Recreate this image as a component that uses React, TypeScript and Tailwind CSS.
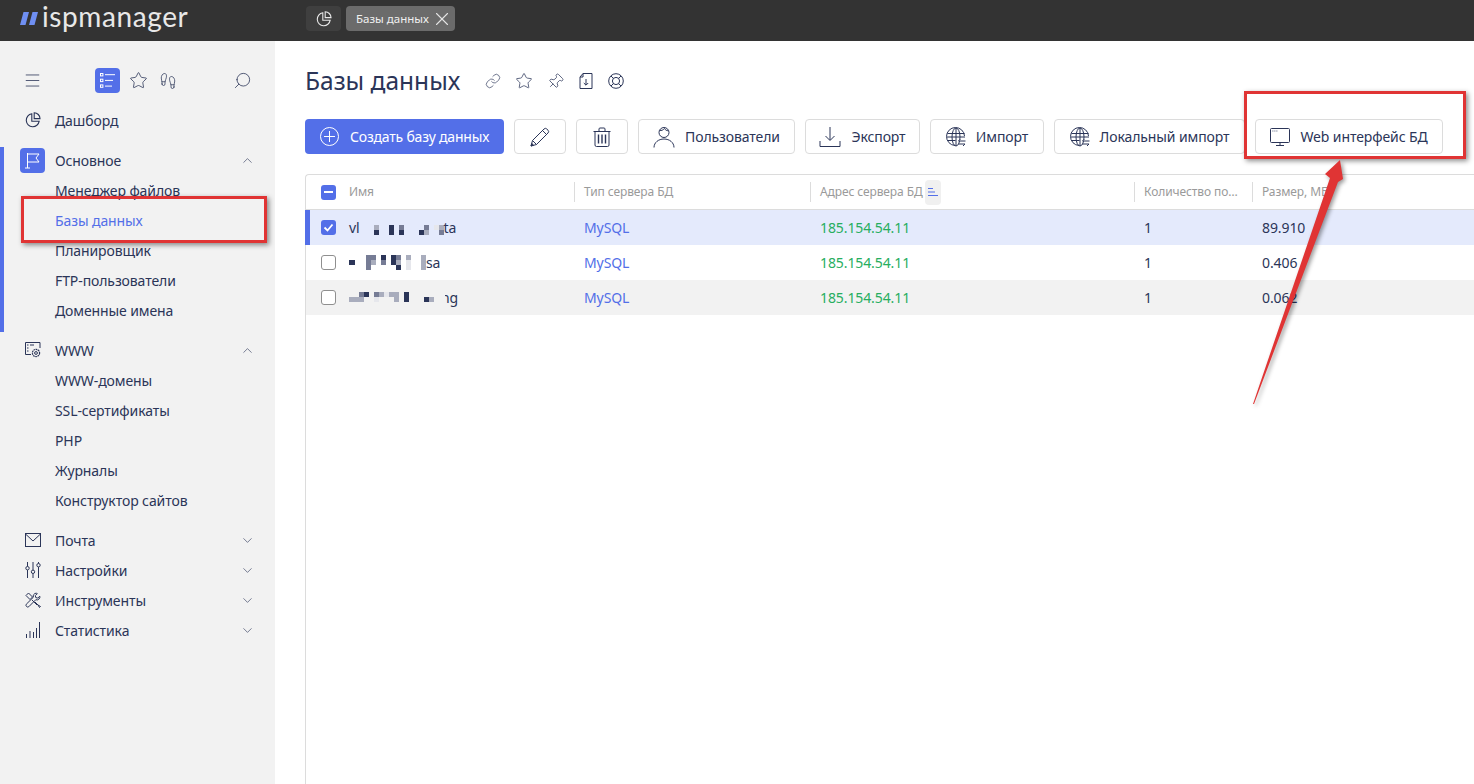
import { ChevronDown, ChevronUp, Link, Menu, Pin, Search, Star, Footprints, X } from "lucide-react";
import type { ReactNode } from "react";

const font = { fontFamily: '"Noto Sans", sans-serif' };

function Pie({ className }: { className: string }) {
  return (
    <svg className={className} viewBox="0 0 16 16" fill="none" stroke="currentColor" strokeWidth="1.1">
      <path d="M6.8 1.8a6.5 6.5 0 1 0 7.4 7.4H6.8z" />
      <path d="M9.2.8v5.8H15A5.8 5.8 0 0 0 9.2.8z" />
    </svg>
  );
}

function Line({ size, box, children, className = "" }: { size: number; box?: number; children: ReactNode; className?: string }) {
  const b = box ?? size;
  return (
    <svg width={size} height={size} viewBox={`0 0 ${b} ${b}`} fill="none" stroke="currentColor" strokeWidth="1" className={`shrink-0 ${className}`}>
      {children}
    </svg>
  );
}

const Flag = () => (
  <Line size={17} className="text-white">
    <path d="M3.5 1v15M1 16h5M3.5 2H15l-3 4 3 4H3.5" />
  </Line>
);

const SiteGear = () => (
  <Line size={16}>
    <path d="M6 12.5H.5V.5h14.5V6" />
    <path d="M2 3h1.5M5 3h4M2 6h1.5M2 9h1.5" />
    <circle cx="11" cy="11" r="3.6" strokeDasharray="1.7 .6" strokeWidth="1.2" />
    <circle cx="11" cy="11" r="1.4" />
  </Line>
);

const Bars = () => (
  <Line size={16}>
    <path d="M1.5 16v-4M5 16V9M8.5 16v-6M11.5 16V6M14.5 16V0" />
  </Line>
);

const Tasks = () => (
  <Line size={15} className="text-white">
    <rect x="0.5" y="0.5" width="2.4" height="2.4" />
    <rect x="0.5" y="6.2" width="2.4" height="2.4" />
    <rect x="0.5" y="11.9" width="2.4" height="2.4" />
    <path d="M5 1.7h10M5 7.4h8M5 13.1h7" />
  </Line>
);

const Envelope = () => (
  <Line size={16}>
    <rect x="0.5" y="1.5" width="15" height="13" />
    <path d="M.5 2l7.5 7 7.5-7" />
  </Line>
);

const Sliders = () => (
  <Line size={16}>
    <path d="M2.5 0v4.5M2.5 8v8M8 0v8M8 11.5V16M13.5 0v1.5M13.5 5v11" />
    <circle cx="2.5" cy="6.2" r="1.7" />
    <circle cx="8" cy="9.8" r="1.7" />
    <circle cx="13.5" cy="3.2" r="1.7" />
  </Line>
);

const Tools = () => (
  <Line size={16}>
    <path d="M1 3.5L3.5 1l4 4-2.5 2.5zM7 8l5 5" />
    <path d="M11 1.2a3 3 0 0 0-2.6 4L1.3 12.2a1.8 1.8 0 0 0 2.5 2.5l7-7a3 3 0 0 0 4-3.6l-2 2-2-.5-.5-2 2-2a3 3 0 0 0-1.3-.4z" />
    <path d="M10 10l3 3 1.5 2.5 1-1L13 13" />
  </Line>
);

const FileArrow = () => (
  <Line size={16}>
    <path d="M5 .5h9v15H2V4zM5 .5V4H2" />
    <path d="M8 6v6M5.8 10L8 12.2 10.2 10" />
  </Line>
);

const Buoy = () => (
  <Line size={16}>
    <circle cx="8" cy="8" r="7.3" />
    <circle cx="8" cy="8" r="3.6" />
    <path d="M3 3l2.5 2.5M13 3l-2.5 2.5M3 13l2.5-2.5M13 13l-2.5-2.5" />
  </Line>
);

const PencilIcon = () => (
  <Line size={20}>
    <path d="M1 19l1.5-5.5L14 2a2 2 0 0 1 2.8 0l1.2 1.2a2 2 0 0 1 0 2.8L6.5 17.5z" />
    <path d="M12.5 3.5l4 4M2.5 13.5l4 4M4 12l9.5-9.5M8 16l9.5-9.5" />
    <path d="M1 19l2.5-.8-1.7-1.7z" fill="currentColor" />
  </Line>
);

const Bin = () => (
  <Line size={20}>
    <path d="M1.5 4.5h17M7 4.5V2a1 1 0 0 1 1-1h4a1 1 0 0 1 1 1v2.5" />
    <path d="M3 4.5V18a1.5 1.5 0 0 0 1.5 1.5h11A1.5 1.5 0 0 0 17 18V4.5" />
    <path d="M6.5 7.5v9M10 7.5v9M13.5 7.5v9" strokeWidth="1.4" />
  </Line>
);

const Person = () => (
  <Line size={22}>
    <circle cx="11" cy="6.5" r="5" />
    <path d="M6.5 4.5c2 .2 3.5-.3 5-2 1 1.7 2 2.2 4 2.2" />
    <path d="M1 21.5c0-5 4.5-8.5 10-8.5s10 3.5 10 8.5" />
  </Line>
);

const Tray = () => (
  <Line size={22}>
    <path d="M11 1v13M6.5 10l4.5 4.5 4.5-4.5" />
    <path d="M1 15v5.5h20V15" />
  </Line>
);

const GlobeArrows = () => (
  <Line size={20}>
    <path d="M9 18.5A9 9 0 1 1 18.5 9" />
    <ellipse cx="10" cy="10" rx="4" ry="9" />
    <path d="M10 1v18M1.5 6.5h17M1 10h18M1.5 13.5h8" />
    <path d="M19.5 14H12.5l2-2M12 17h7l-2 2" fill="#fff" />
  </Line>
);

const Screen = () => (
  <Line size={20}>
    <rect x="0.5" y="1.5" width="19" height="14" rx="1" />
    <path d="M6 18.5h8M10 15.5v3M2.5 4h.8M4.5 4h.8M6.5 4h.8" />
  </Line>
);

// pixelated (censored) bits of the database names
function Mosaic({ cells, width }: { cells: [number, number, string][]; width: number }) {
  return (
    <svg width={width} height="15" viewBox={`0 0 ${width} 15`} className="shrink-0">
      {cells.map(([x, y, c], i) => (
        <rect key={i} x={x} y={y} width="5" height="5" fill={c} />
      ))}
    </svg>
  );
}

const D = "#2b3558";
const M = "#767c95";
const L = "#a9adbd";
const P = "#e6e7ec";

const mosaic1: [number, number, string][] = [
  [0, 5, L], [0, 10, D],
  [15, 5, D], [15, 10, D],
  [25, 5, M], [25, 10, D],
  [45, 10, D], [50, 5, M], [50, 10, L],
  [60, 5, P], [65, 5, L], [65, 10, M],
];

const mosaic2: [number, number, string][] = [
  [0, 0, M], [0, 5, M], [0, 10, M], [5, 0, M], [5, 5, L],
  [15, 0, D], [15, 5, M],
  [25, 0, D], [25, 5, D], [30, 0, M], [30, 5, L], [30, 10, D],
  [40, 0, L], [40, 5, P], [40, 10, P],
  [55, 0, L], [55, 5, L], [55, 10, L],
];

const mosaic3: [number, number, string][] = [
  [0, 7, L], [5, 7, L], [10, 2, M], [10, 7, L], [15, 2, D],
  [25, 2, M], [25, 7, P], [30, 2, L], [35, 2, P], [40, 2, L], [45, 2, L], [45, 7, L],
  [55, 2, D], [55, 7, D],
  [75, 7, D], [80, 7, L],
];

function SideItem({ icon, label, open, tile }: { icon?: ReactNode; label: string; open?: boolean; tile?: boolean }) {
  return (
    <div className="flex items-center h-[30px] pl-[20px] pr-[20px] text-[14px] text-[#2b3558]">
      <div className={`w-[25px] h-[25px] shrink-0 flex items-center justify-center rounded-[4px] ${tile ? "bg-[#536fe8]" : ""}`}>{icon}</div>
      <span className="ml-[10px] flex-1 whitespace-nowrap tracking-[-0.1px]">{label}</span>
      {open === true && <ChevronUp className="w-[15px] h-[15px]" strokeWidth={1} />}
      {open === false && <ChevronDown className="w-[15px] h-[15px]" strokeWidth={1} />}
    </div>
  );
}

function ToolButton({ icon, label, className }: { icon: ReactNode; label?: string; className: string }) {
  return (
    <div className={`h-[35px] shrink-0 flex items-center justify-center gap-[10px] rounded-[4px] border border-[#dcdcdc] bg-white text-[14px] text-[#2b3558] whitespace-nowrap tracking-[-0.1px] ${className}`}>
      {icon}
      {label && <span>{label}</span>}
    </div>
  );
}

function Check({ state }: { state: "on" | "off" | "some" }) {
  if (state === "off") return <div className="w-[15px] h-[15px] rounded-[3px] border border-[#8f8f8f] bg-white" />;
  return (
    <div className="w-[15px] h-[15px] rounded-[3px] bg-[#536fe8] flex items-center justify-center">
      {state === "on" ? (
        <svg className="w-[11px] h-[11px]" viewBox="0 0 11 11" fill="none" stroke="white" strokeWidth="1.8">
          <path d="M1.5 5.5l3 3 5-6" />
        </svg>
      ) : (
        <div className="w-[9px] h-[2px] bg-white" />
      )}
    </div>
  );
}

function Row({ check, name, size, className, selected }: { check: "on" | "off"; name: ReactNode; size: string; className?: string; selected?: boolean }) {
  return (
    <div className={`relative grid grid-cols-[268px_236px_324px_118px_1fr] h-[35px] items-center text-[14px] text-[#2b3558] tracking-[-0.1px] ${className ?? ""}`}>
      {selected && <div className="absolute left-[-1px] top-0 bottom-0 w-[5px] bg-[#536fe8]" />}
      <div className="flex items-center pl-[15px] gap-[13px]">
        <Check state={check} />
        <div className="flex items-center">{name}</div>
      </div>
      <div className="pl-[10px] text-[#536fe8]">MySQL</div>
      <div className="pl-[10px] text-[#27ae60]">185.154.54.11</div>
      <div className="pl-[10px]">1</div>
      <div className="pl-[10px]">{size}</div>
    </div>
  );
}

function HeadCell({ children }: { children: ReactNode }) {
  return <div className="h-[20px] pl-[9px] flex items-center border-l border-[#dcdcdc] whitespace-nowrap">{children}</div>;
}

const sub = ["Менеджер файлов", "Базы данных", "Планировщик", "FTP-пользователи", "Доменные имена"];
const www = ["WWW-домены", "SSL-сертификаты", "PHP", "Журналы", "Конструктор сайтов"];

export default function App() {
  return (
    <div className="relative w-[1474px] h-[784px] overflow-hidden bg-white flex flex-col" style={font}>
      <header className="h-[41px] shrink-0 bg-[#333333] flex items-start">
        <div className="w-[306px] shrink-0 pl-[20px] h-[35px] flex items-center">
          <svg className="w-[18px] h-[13px] mt-[2px]" viewBox="0 0 18 13" fill="#6f8ff2">
            <path d="M3.5 0H9L5.5 13H0zM12.5 0H18l-3.5 13H9z" />
          </svg>
          <span className="ml-[4px] -mt-[4px] text-[28px] leading-none text-[#e8e8e8] tracking-[0.6px]" style={{ fontFamily: "Lato, sans-serif" }}>ispmanager</span>
        </div>
        <div className="mt-[6px] flex gap-[5px]">
          <div className="w-[35px] h-[25px] rounded-[4px] bg-[#3f3f3f] text-[#e8e8e8] flex items-center justify-center">
            <Pie className="w-[16px] h-[16px]" />
          </div>
          <div className="w-[109px] h-[25px] rounded-[4px] bg-[#6b6b6b] text-[#f0f0f0] text-[11.5px] flex items-center pl-[10px] gap-[2px] whitespace-nowrap">
            Базы данных
            <X className="w-[22px] h-[22px] text-[#e4e4e4]" strokeWidth={1.2} />
          </div>
        </div>
      </header>

      <div className="flex-1 flex min-h-0">
        <aside className="relative w-[275px] shrink-0 bg-[#f2f2f2] pt-[27px] text-[#2b3558]">
          <div className="flex items-center h-[25px] pl-[23px] pr-[23px]">
            <Menu className="w-[19px] h-[19px]" strokeWidth={1} />
            <div className="ml-[53px] w-[25px] h-[25px] rounded-[4px] bg-[#536fe8] flex items-center justify-center"><Tasks /></div>
            <Star className="ml-[9px] w-[19px] h-[19px]" strokeWidth={1} />
            <Footprints className="ml-[11px] w-[18px] h-[18px]" strokeWidth={1} />
            <Search className="ml-auto w-[19px] h-[19px] -scale-x-100" strokeWidth={1} />
          </div>

          <div className="mt-[12px]">
            <SideItem icon={<Pie className="w-[16px] h-[16px]" />} label="Дашборд" />
          </div>

          <div className="relative mt-[10px]">
            <div className="absolute left-0 top-[2px] bottom-[-7px] w-[4px] bg-[#536fe8]" />
            <SideItem icon={<Flag />} label="Основное" open tile />
            {sub.map((s, i) => (
              <div key={s} className={`h-[30px] pl-[55px] flex items-center text-[14px] tracking-[-0.1px] ${i === 1 ? "text-[#536fe8]" : ""}`}>{s}</div>
            ))}
          </div>

          <div className="mt-[10px]">
            <SideItem icon={<SiteGear />} label="WWW" open />
            {www.map((s) => (
              <div key={s} className="h-[30px] pl-[55px] flex items-center text-[14px] tracking-[-0.1px]">{s}</div>
            ))}
          </div>

          <div className="mt-[10px]">
            <SideItem icon={<Envelope />} label="Почта" open={false} />
            <SideItem icon={<Sliders />} label="Настройки" open={false} />
            <SideItem icon={<Tools />} label="Инструменты" open={false} />
            <SideItem icon={<Bars />} label="Статистика" open={false} />
          </div>
        </aside>

        <main className="flex-1 min-w-0 pl-[30px] pt-[26px] flex flex-col">
          <div className="flex items-center h-[28px] text-[#2b3558]">
            <h1 className="text-[24.5px] font-normal leading-none whitespace-nowrap w-[180px]">Базы данных</h1>
            <div className="flex items-center gap-[14px]">
              <Link className="w-[16px] h-[16px]" strokeWidth={1} />
              <Star className="w-[18px] h-[18px]" strokeWidth={1} />
              <Pin className="w-[17px] h-[17px] rotate-45" strokeWidth={1} />
              <FileArrow />
              <Buoy />
            </div>
          </div>

          <div className="mt-[24px] flex gap-[10px] pr-[20px]">
            <div className="w-[199px] h-[35px] shrink-0 rounded-[4px] bg-[#536fe8] text-white text-[14px] tracking-[-0.2px] flex items-center pl-[15px] gap-[11px] whitespace-nowrap">
              <Line size={19}>
                <circle cx="9.5" cy="9.5" r="9" />
                <path d="M9.5 4v11M4 9.5h11" />
              </Line>
              Создать базу данных
            </div>
            <ToolButton className="w-[52px]" icon={<PencilIcon />} />
            <ToolButton className="w-[52px]" icon={<Bin />} />
            <ToolButton className="w-[157px]" icon={<Person />} label="Пользователи" />
            <ToolButton className="w-[115px]" icon={<Tray />} label="Экспорт" />
            <ToolButton className="w-[114px]" icon={<GlobeArrows />} label="Импорт" />
            <ToolButton className="w-[191px]" icon={<GlobeArrows />} label="Локальный импорт" />
            <ToolButton className="w-[188px]" icon={<Screen />} label="Web интерфейс БД" />
          </div>

          <div className="mt-[20px] flex-1 border-l border-t border-[#dcdcdc] rounded-tl-[4px]">
            <div className="grid grid-cols-[268px_236px_324px_118px_1fr] h-[35px] items-center text-[12px] text-[#9a9a9a] tracking-[-0.1px] border-b border-[#dcdcdc]">
              <div className="flex items-center pl-[15px] gap-[13px]">
                <Check state="some" />
                Имя
              </div>
              <HeadCell>Тип сервера БД</HeadCell>
              <HeadCell>
                Адрес сервера БД
                <span className="ml-[2px] w-[16px] h-[25px] rounded-[4px] bg-[#f0f0f0] flex items-center justify-center text-[#536fe8]">
                  <svg className="w-[10px] h-[10px]" viewBox="0 0 10 10" stroke="currentColor" strokeWidth="1.2">
                    <path d="M0 1.5h5M0 5h7M0 8.5h10" />
                  </svg>
                </span>
              </HeadCell>
              <HeadCell>Количество по…</HeadCell>
              <HeadCell>Размер, МБ</HeadCell>
            </div>
            <Row
              check="on"
              size="89.910"
              selected
              className="bg-[#e4eafc]"
              name={<>vl<span className="ml-[14px]"><Mosaic width={70} cells={mosaic1} /></span><span>ta</span></>}
            />
            <Row
              check="off"
              size="0.406"
              name={<><span className="w-[6px] h-[5px] bg-[#2b3558]" /><span className="ml-[11px]"><Mosaic width={60} cells={mosaic2} /></span><span>sa</span></>}
            />
            <Row
              check="off"
              size="0.062"
              className="bg-[#f2f2f2]"
              name={<><Mosaic width={87} cells={mosaic3} /><span className="relative ml-[5px]">ng<span className="absolute left-0 top-0 bottom-0 w-[4px] bg-[#f2f2f2]" /></span></>}
            />
          </div>
        </main>
      </div>

      {/* screenshot annotations drawn over the page */}
      <div className="absolute left-[21px] top-[196px] w-[246px] h-[47px] border-[3px] border-[#e03434] shadow-[2px_2px_5px_rgba(0,0,0,0.45)]" />
      <div className="absolute left-[1244px] top-[91px] w-[222px] h-[68px] border-[3px] border-[#e03434] shadow-[2px_2px_5px_rgba(0,0,0,0.45)]" />
      <svg className="absolute left-[1245px] top-[155px] w-[110px] h-[255px] drop-shadow-[2px_2px_2px_rgba(0,0,0,0.4)]" viewBox="0 0 110 255">
        <path d="M8 249L85 23 80 19 95 5 98 24 93 27 9 249z" fill="#e03434" />
      </svg>
    </div>
  );
}
